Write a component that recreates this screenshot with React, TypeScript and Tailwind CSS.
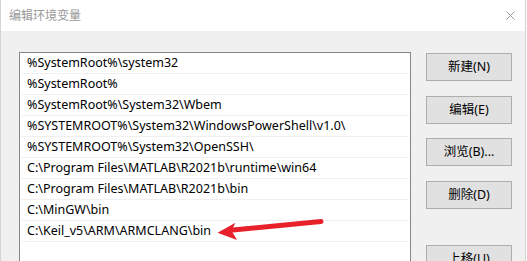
import React from "react";

const rows = [
  "%SystemRoot%\\system32",
  "%SystemRoot%",
  "%SystemRoot%\\System32\\Wbem",
  "%SYSTEMROOT%\\System32\\WindowsPowerShell\\v1.0\\",
  "%SYSTEMROOT%\\System32\\OpenSSH\\",
  "C:\\Program Files\\MATLAB\\R2021b\\runtime\\win64",
  "C:\\Program Files\\MATLAB\\R2021b\\bin",
  "C:\\MinGW\\bin",
  "C:\\Keil_v5\\ARM\\ARMCLANG\\bin",
];

const font = { fontFamily: '"Noto Sans", "Noto Sans CJK SC", sans-serif' };

function Btn({ label, className = "" }: { label: string; className?: string }) {
  return (
    <div
      className={`shrink-0 w-[86px] h-[28px] border border-[#adadad] bg-[#e1e1e1] flex items-center justify-center text-[12.5px] text-black ${className}`}
    >
      {label}
    </div>
  );
}

export default function App() {
  return (
    <div
      className="relative w-[527px] h-[261px] overflow-hidden bg-white"
      style={font}
    >
      <div className="w-[526px] h-[261px] border-l border-r border-[#d4d4d4] bg-[#f0f0f0] flex flex-col">
        <div className="shrink-0 h-[31px] bg-white flex items-center justify-between pl-[8px] pr-[10px]">
          <span className="text-[12px] text-[#999999]">编辑环境变量</span>
          <svg width="9" height="9" viewBox="0 0 9 9" className="mt-[-1px]">
            <path d="M0.5 0.5 L8.5 8.5 M8.5 0.5 L0.5 8.5" stroke="#9a9a9a" strokeWidth="1" />
          </svg>
        </div>
        <div className="shrink-0 flex pt-[21px] pl-[18px]">
          <div className="shrink-0 w-[392px] h-[300px] border border-[#828790] bg-white px-[1px]">
            {rows.map((r) => (
              <div
                key={r}
                className="h-[21px] border-b border-[#f0f0f0] flex items-center pl-[6px] text-[12.5px] text-black leading-none"
              >
                {r}
              </div>
            ))}
          </div>
          <div className="ml-[15px] pt-[1px] flex flex-col">
            <Btn label="新建(N)" />
            <Btn label="编辑(E)" className="mt-[15px]" />
            <Btn label="浏览(B)..." className="mt-[14px]" />
            <Btn label="删除(D)" className="mt-[15px]" />
            <Btn label="上移(U)" className="mt-[36px]" />
          </div>
        </div>
      </div>
      <svg
        className="absolute left-0 top-0 pointer-events-none"
        width="527"
        height="261"
        viewBox="0 0 527 261"
      >
        <path d="M233 230 L321 221.5" stroke="#e8202a" strokeWidth="5" strokeLinecap="round" />
        <path d="M217.5 232.8 L235.5 222.8 L231.5 230.6 L237 240 Z" fill="#e8202a" />
      </svg>
    </div>
  );
}
